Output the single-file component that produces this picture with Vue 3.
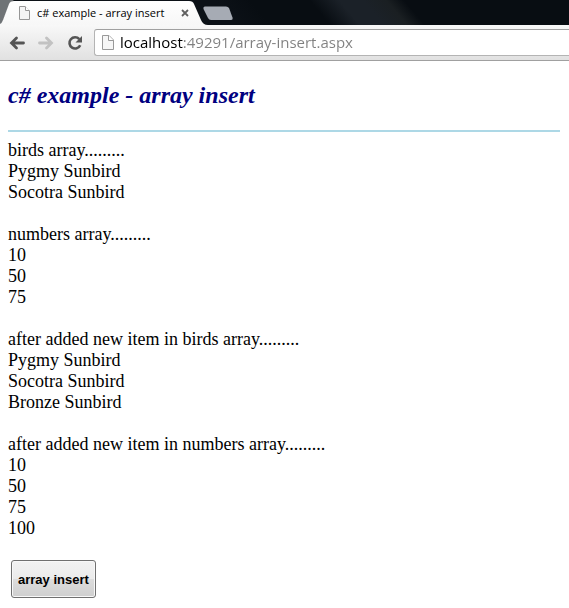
<script setup>
import { ref } from 'vue'

const title = 'c# example - array insert'
const address = ref('localhost:49291/array-insert.aspx')

const groups = [
  { label: 'birds array.........', items: ['Pygmy Sunbird', 'Socotra Sunbird'] },
  { label: 'numbers array.........', items: ['10', '50', '75'] },
  {
    label: 'after added new item in birds array.........',
    items: ['Pygmy Sunbird', 'Socotra Sunbird', 'Bronze Sunbird'],
  },
  {
    label: 'after added new item in numbers array.........',
    items: ['10', '50', '75', '100'],
  },
]
</script>

<template>
  <div class="browser">
    <header>
      <div class="tab-strip">
        <div class="tab">
          <svg class="tab-shape" width="208" height="25" viewBox="0 0 208 25" aria-hidden="true">
            <defs>
              <linearGradient id="tab-fill" x1="0" y1="0" x2="0" y2="1">
                <stop offset="0" stop-color="#ffffff" />
                <stop offset="1" stop-color="#f7f7f7" />
              </linearGradient>
            </defs>
            <path d="M0 0H14L10 3L3 21Q2 24 0 25Z" fill="#6f7376" />
            <path
              d="M0 25V24Q2 23 3 20L9 4Q10 1 14 1H189Q193 1 194 4L201 20Q203 25 208 25Z"
              fill="url(#tab-fill)"
            />
          </svg>
          <svg class="page-icon" width="12" height="14" viewBox="0 0 12 14" aria-hidden="true">
            <path d="M1.5 .5H7L11.5 5V13.5H1.5Z" fill="#f4f4f4" stroke="#969696" />
            <path d="M7.5 .5V4.5H11.5" fill="#fff" stroke="#969696" />
          </svg>
          <span class="tab-title">{{ title }}</span>
          <button class="tab-close" type="button" aria-label="Close tab">
            <svg width="8" height="8" viewBox="0 0 8 8" aria-hidden="true">
              <path d="M1 1L7 7M7 1L1 7" stroke="#606060" stroke-width="1.800" />
            </svg>
          </button>
        </div>
        <button class="new-tab" type="button" aria-label="New tab">
          <svg width="32" height="15" viewBox="0 0 32 15" aria-hidden="true">
            <path
              d="M3 .5H24Q26 .5 27 2L30.500 11.500Q31 14 29 14H9Q7 14 6 12L1.500 3Q1 .5 3 .5Z"
              fill="#a6abb4"
            />
          </svg>
        </button>
      </div>

      <nav class="toolbar" aria-label="Navigation">
        <button class="tool" type="button" aria-label="Back">
          <svg width="16" height="14" viewBox="0 0 16 14" aria-hidden="true">
            <path d="M14.500 7H3M7.500 2L2.500 7L7.500 12" fill="none" stroke="#555" stroke-width="2.800" stroke-linecap="round" />
          </svg>
        </button>
        <button class="tool" type="button" aria-label="Forward">
          <svg width="16" height="14" viewBox="0 0 16 14" aria-hidden="true">
            <path d="M1.500 7H13M8.500 2L13.500 7L8.500 12" fill="none" stroke="#c2c2c2" stroke-width="2.800" stroke-linecap="round" />
          </svg>
        </button>
        <button class="tool" type="button" aria-label="Reload">
          <svg width="16" height="16" viewBox="0 0 16 16" aria-hidden="true">
            <path
              d="M12.300 4.200A5.600 5.600 0 1 0 13.200 10.200"
              fill="none"
              stroke="#555"
              stroke-width="2.600"
            />
            <path d="M15 1V7.500H8.500Z" fill="#555" />
          </svg>
        </button>
        <label class="address">
          <svg class="page-icon" width="12" height="16" viewBox="0 0 12 16" aria-hidden="true">
            <path d="M.5 .5H7L11.500 5V14.500H.5Z" fill="#f6f6f6" stroke="#999" />
            <path d="M6.500 .5V5.500H11.500" fill="#fff" stroke="#999" />
          </svg>
          <input v-model="address" type="text" aria-label="Address" spellcheck="false" />
        </label>
      </nav>
    </header>

    <main>
      <h2>{{ title }}</h2>
      <hr />
      <section v-for="group in groups" :key="group.label">
        <p>{{ group.label }}</p>
        <p v-for="item in group.items" :key="item">{{ item }}</p>
      </section>
      <button class="submit" type="button">array insert</button>
    </main>
  </div>
</template>

<style>
body {
  margin: 0;
  background: #fff;
}
</style>

<style scoped>
.browser {
  color: #000;
  font-family: "Liberation Serif", "Times New Roman", serif;
  font-size: 18px;
  line-height: 21px;
}

button {
  padding: 0;
  border: 0;
  background: none;
}

svg {
  display: block;
  flex: none;
}

.tab-strip {
  display: flex;
  height: 25px;
  background: linear-gradient(50deg, #0c1117 0 40%, #080d12 46% 56%, #1b2128 61% 65%, #1a1f22 69%, #080d12 72%);
}

.tab {
  position: relative;
  display: flex;
  align-items: center;
  box-sizing: border-box;
  width: 202px;
  padding: 1px 13px 0 18px;
}

.tab-shape {
  position: absolute;
  top: 0;
  left: 0;
}

.tab .page-icon,
.tab-title,
.tab-close {
  position: relative;
}

.tab-title {
  flex: 1;
  margin-left: 7px;
  font-family: "Open Sans", "Noto Sans", sans-serif;
  font-size: 11px;
  line-height: 16px;
  white-space: nowrap;
}

.new-tab {
  align-self: center;
  padding-top: 2px;
}

.toolbar {
  display: flex;
  align-items: center;
  box-sizing: border-box;
  height: 36px;
  padding-left: 9px;
  border-bottom: 1px solid #a0a0a0;
  background: linear-gradient(#f8f8f8, #e1e1e1);
}

.tool {
  display: flex;
  align-items: center;
  justify-content: center;
  width: 16px;
  margin-right: 13px;
}

.tool:nth-child(3) {
  margin-right: 11px;
}

.address {
  display: flex;
  flex: 1;
  align-items: center;
  box-sizing: border-box;
  height: 27px;
  padding-left: 7px;
  border: 1px solid #b4b4b4;
  border-top-color: #a0a0a0;
  border-right: 0;
  border-radius: 3px 0 0 3px;
  background: #fff;
}

.address input {
  flex: 1;
  min-width: 0;
  height: 24px;
  margin-left: 6px;
  padding: 0 0 2px;
  box-sizing: border-box;
  border: 0;
  outline: 0;
  background: linear-gradient(90deg, #000 63px, #808080 63px);
  background-clip: text;
  color: transparent;
  font-family: "Open Sans", "Noto Sans", sans-serif;
  font-size: 15px;
}

main {
  padding: 20px 9px 8px 8px;
}

h2 {
  margin: 0 0 21px;
  color: #000080;
  font-size: 24px;
  font-style: italic;
  font-weight: 700;
  line-height: 28px;
}

hr {
  height: 2px;
  margin: 0 0 8px;
  border: 0;
  background: #add8e6;
}

section {
  margin-bottom: 21px;
}

p {
  margin: 0;
}

.submit {
  display: block;
  height: 38px;
  margin-left: 3px;
  padding: 0 6px;
  border: 1px solid #707070;
  border-radius: 3px;
  background: linear-gradient(#f2f2f2, #ebebeb 49%, #dddddd 50%, #cfcfcf);
  box-shadow: inset 0 0 0 1px #f8f8f8;
  color: #000;
  font-family: "Liberation Sans", Arial, sans-serif;
  font-size: 13px;
  font-weight: 700;
}
</style>
